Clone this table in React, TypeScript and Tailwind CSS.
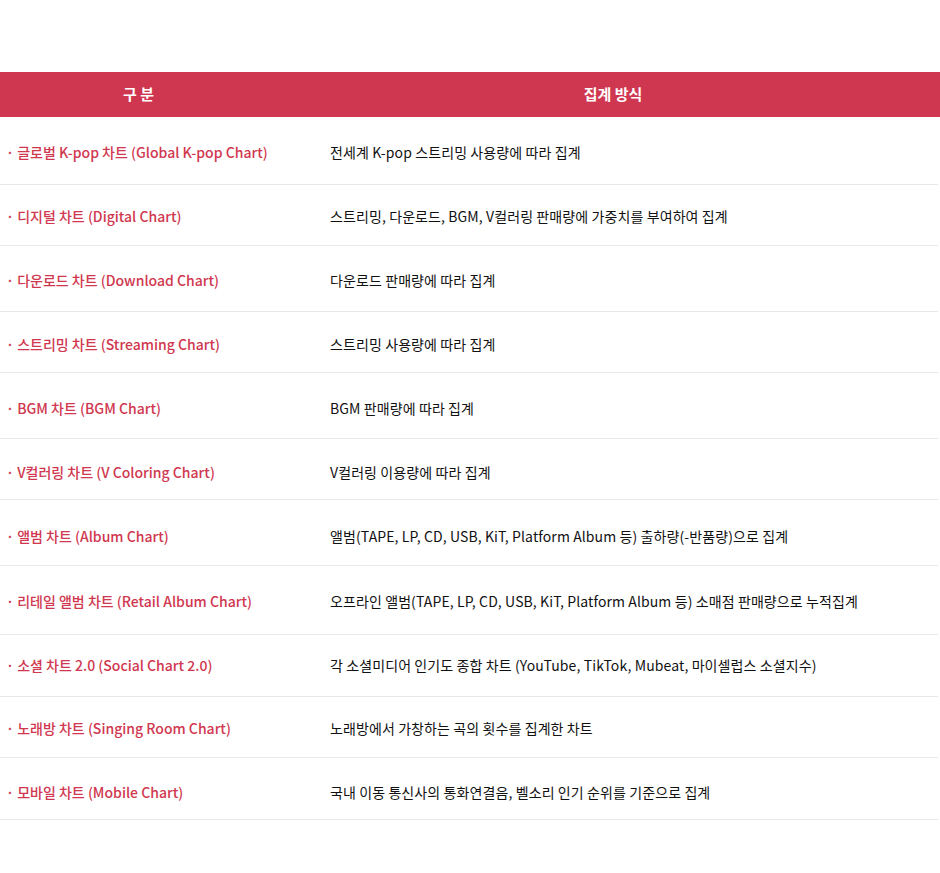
import React from "react";

const rows: { name: string; desc: string; h: string; pt: string }[] = [
  { name: "글로벌 K-pop 차트 (Global K-pop Chart)", desc: "전세계 K-pop 스트리밍 사용량에 따라 집계", h: "h-[68px]", pt: "pt-[25px]" },
  { name: "디지털 차트 (Digital Chart)", desc: "스트리밍, 다운로드, BGM, V컬러링 판매량에 가중치를 부여하여 집계", h: "h-[61px]", pt: "pt-[21px]" },
  { name: "다운로드 차트 (Download Chart)", desc: "다운로드 판매량에 따라 집계", h: "h-[66px]", pt: "pt-[24px]" },
  { name: "스트리밍 차트 (Streaming Chart)", desc: "스트리밍 사용량에 따라 집계", h: "h-[61px]", pt: "pt-[22px]" },
  { name: "BGM 차트 (BGM Chart)", desc: "BGM 판매량에 따라 집계", h: "h-[66px]", pt: "pt-[25px]" },
  { name: "V컬러링 차트 (V Coloring Chart)", desc: "V컬러링 이용량에 따라 집계", h: "h-[61px]", pt: "pt-[23px]" },
  { name: "앨범 차트 (Album Chart)", desc: "앨범(TAPE, LP, CD, USB, KiT, Platform Album 등) 출하량(-반품량)으로 집계", h: "h-[66px]", pt: "pt-[26px]" },
  { name: "리테일 앨범 차트 (Retail Album Chart)", desc: "오프라인 앨범(TAPE, LP, CD, USB, KiT, Platform Album 등) 소매점 판매량으로 누적집계", h: "h-[69px]", pt: "pt-[25px]" },
  { name: "소셜 차트 2.0 (Social Chart 2.0)", desc: "각 소셜미디어 인기도 종합 차트 (YouTube, TikTok, Mubeat, 마이셀럽스 소셜지수)", h: "h-[62px]", pt: "pt-[20px]" },
  { name: "노래방 차트 (Singing Room Chart)", desc: "노래방에서 가창하는 곡의 횟수를 집계한 차트", h: "h-[61px]", pt: "pt-[21px]" },
  { name: "모바일 차트 (Mobile Chart)", desc: "국내 이동 통신사의 통화연결음, 벨소리 인기 순위를 기준으로 집계", h: "h-[62px]", pt: "pt-[24px]" },
];

export default function App() {
  return (
    <div className="w-[940px] h-[873px] bg-white pt-[72px] font-['Noto_Sans_CJK_KR',sans-serif]">
      <div className="flex h-[45px] bg-[#cf3650] text-white text-[15px] font-bold items-center">
        <div className="w-[277px] text-center">구 분</div>
        <div className="flex-1 text-center pl-[9px]">집계 방식</div>
      </div>
      {rows.map((r) => (
        <div key={r.name} className={`flex items-start border-b border-[#e8e8e8] w-[938px] leading-[21px] ${r.h} ${r.pt}`}>
          <div className="w-[330px] pl-[6px] text-[14px] font-medium text-[#d0384f] whitespace-nowrap">
            · {r.name}
          </div>
          <div className="flex-1 text-[14px] tracking-[0.1px] text-[#111] whitespace-nowrap">{r.desc}</div>
        </div>
      ))}
    </div>
  );
}
